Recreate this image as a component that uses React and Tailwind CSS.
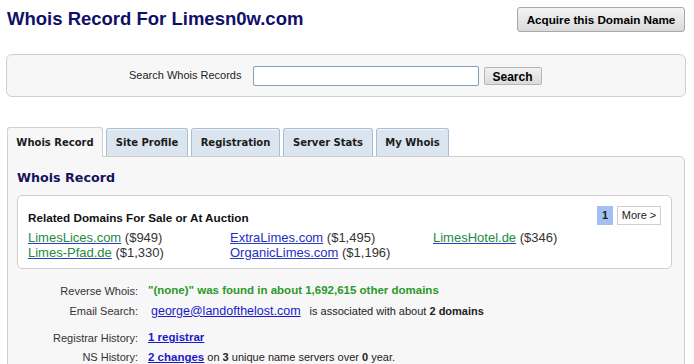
import React from 'react';

const tabs = [
  { label: 'Whois Record', w: 'w-[96px]', active: true },
  { label: 'Site Profile', w: 'w-[82px]' },
  { label: 'Registration', w: 'w-[89px]' },
  { label: 'Server Stats', w: 'w-[90px]' },
  { label: 'My Whois', w: 'w-[73px]' },
];

// green = for sale, blue = auction
const related = [
  [{ name: 'LimesLices.com', price: '($949)', sale: true }, { name: 'ExtraLimes.com', price: '($1,495)' }, { name: 'LimesHotel.de', price: '($346)', sale: true }],
  [{ name: 'Limes-Pfad.de', price: '($1,330)', sale: true }, { name: 'OrganicLimes.com', price: '($1,196)' }],
];

const DomainLink = ({ d }) => (
  <span>
    <a href="#" className={`underline decoration-[#2a3fc8] ${d.sale ? 'text-[#238a45]' : 'text-[#1f2fc0]'}`}>
      {d.name}
    </a>{' '}
    <span className="text-[#333]">{d.price}</span>
  </span>
);

const App = () => {
  return (
    <div className="w-[694px] h-[364px] overflow-hidden bg-white font-['Liberation_Sans',Arial,sans-serif] text-[#222]">
      <div className="flex items-center justify-between pl-[7px] pr-[9px] pt-[7px]">
        <h1 className="text-[18.5px] font-bold text-[#10106a] leading-none">Whois Record For Limesn0w.com</h1>
        <button className="h-[25px] w-[168px] rounded-[3px] border border-[#a8a8a8] bg-gradient-to-b from-[#f4f4f4] to-[#d9d9d9] text-[11.7px] font-bold text-black">
          Acquire this Domain Name
        </button>
      </div>

      <div className="mx-[6px] mt-[22px] flex h-[43px] w-[680px] items-center rounded-[6px] border border-[#cfcfcf] bg-[#f7f7f7] pl-[122px]">
        <span className="text-[11px] text-[#222]">Search Whois Records</span>
        <input type="text" className="ml-[11px] h-[20px] w-[226px] rounded-[2px] border border-[#7f9db9] bg-white" />
        <button className="ml-[5px] h-[18px] w-[58px] rounded-[2px] border border-[#b5b5b5] bg-gradient-to-b from-[#f2f2f2] to-[#dadada] text-[12px] font-bold text-black">
          Search
        </button>
      </div>

      <div className="mt-[30px] flex gap-[3px] pl-[7px] font-['DejaVu_Sans',Verdana,sans-serif]">
        {tabs.map((t) => (
          <div
            key={t.label}
            className={`${t.w} flex items-center justify-center rounded-t-[3px] border border-b-0 text-[10px] font-bold text-[#1b1b1b] ${
              t.active ? 'relative z-10 -mb-px h-[30px] border-[#cfcfcf] bg-[#f7f7f7]' : 'mt-[1px] h-[28px] border-[#a9bdd3] bg-[#dbe5f0] shadow-[inset_0_1px_0_#f4f8fc]'
            }`}
          >
            {t.label}
          </div>
        ))}
      </div>

      <div className="ml-[7px] h-[220px] w-[678px] rounded-tr-[5px] border border-[#cfcfcf] bg-[#f7f7f7] px-[9px] pt-[12px]">
        <h2 className="font-['DejaVu_Sans',Verdana,sans-serif] text-[12.7px] font-bold leading-[18px] text-[#13135e]">Whois Record</h2>

        <div className="mt-[8px] flex h-[74px] w-[655px] justify-between rounded-[5px] border border-[#cfcfcf] bg-white pl-[10px] pr-[10px] pt-[14px]">
          <div>
            <div className="text-[11.7px] font-bold leading-[15px] text-[#111]">Related Domains For Sale or At Auction</div>
            <div className="mt-[5px] text-[13px] leading-[15px]">
              {related.map((row, i) => (
                <div key={i} className="grid grid-cols-[202px_203px_130px]">
                  {row.map((d) => (
                    <DomainLink key={d.name} d={d} />
                  ))}
                </div>
              ))}
            </div>
          </div>
          <div className="-mt-[4px] flex h-[19px] gap-[4px] text-[11px]">
            <span className="flex w-[16px] items-center justify-center bg-[#a3c0f3] font-bold text-[#222]">1</span>
            <span className="flex w-[44px] items-center justify-center border border-[#cfcfcf] bg-white text-[#222]">More &gt;</span>
          </div>
        </div>

        <div className="mt-[12px] text-[11px] text-[#333]">
          <div className="flex h-[20px] items-center">
            <span className="w-[131px] pr-[10px] text-right">Reverse Whois:</span>
            <span className="text-[11.5px] font-bold text-[#2a992a]">"(none)" was found in about 1,692,615 other domains</span>
          </div>
          <div className="flex h-[20px] items-center">
            <span className="w-[131px] pr-[10px] text-right">Email Search:</span>
            <a href="#" className="pl-[3px] pr-[5px] text-[12.5px] text-[#1a1acc] underline">george@landofthelost.com</a>
            <span className="ml-[4px] text-[11px] text-[#222]">is associated with about <b>2 domains</b></span>
          </div>
          <div className="mt-[7px] flex h-[20px] items-center">
            <span className="w-[131px] pr-[10px] text-right">Registrar History:</span>
            <a href="#" className="text-[11.5px] font-bold text-[#1a1acc] underline">1 registrar</a>
          </div>
          <div className="flex h-[19px] items-center">
            <span className="w-[131px] pr-[10px] text-right">NS History:</span>
            <span className="text-[11px] text-[#222]">
              <a href="#" className="text-[11.5px] font-bold text-[#1a1acc] underline">2 changes</a> on <b>3</b> unique name servers over <b>0</b> year.
            </span>
          </div>
        </div>
      </div>
    </div>
  );
};

export default App;
